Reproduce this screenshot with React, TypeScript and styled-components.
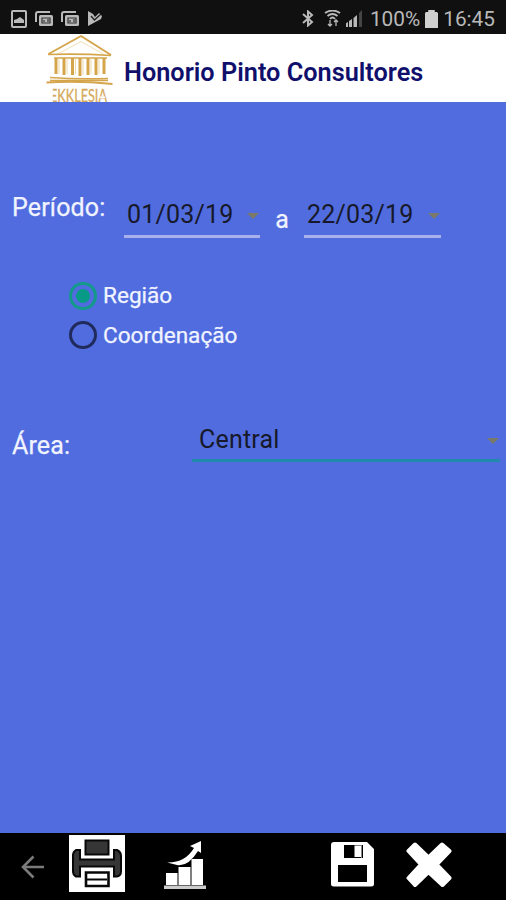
import React from "react";
import styled, { createGlobalStyle } from "styled-components";

const GlobalStyle = createGlobalStyle`
  * { box-sizing: border-box; }
  html, body { margin: 0; padding: 0; background: #000; }
  body { font-family: Roboto, "Noto Sans", sans-serif; overflow: hidden; }
  svg { display: block; flex: none; }
`;

const Screen = styled.div`
  width: 506px;
  height: 900px;
  display: flex;
  flex-direction: column;
  overflow: hidden;
`;

const StatusBar = styled.div`
  height: 34px;
  flex: none;
  display: flex;
  align-items: center;
  justify-content: space-between;
  padding: 3px 11px 0;
  background: #101010;
  color: #b9b9b9;
`;

const StatusGroup = styled.div<{ $gap: number }>`
  display: flex;
  align-items: center;
  gap: ${(p) => p.$gap}px;
`;

const StatusText = styled.span`
  font-size: 20.8px;
  line-height: 24px;
`;

const Header = styled.header`
  height: 68px;
  flex: none;
  display: flex;
  align-items: flex-start;
  padding-left: 44px;
  background: #fff;
`;

const Title = styled.h1`
  margin: 24px 0 0 10px;
  font-size: 25.3px;
  line-height: 30px;
  font-weight: 600;
  color: #10106c;
  white-space: nowrap;
`;

const Form = styled.main`
  flex: 1;
  display: flex;
  flex-direction: column;
  padding-left: 12px;
  background: #506cdf;
`;

const Row = styled.div<{ $top: number }>`
  display: flex;
  align-items: flex-start;
  margin-top: ${(p) => p.$top}px;
`;

const Label = styled.span<{ $width: number; $top?: number; $center?: boolean }>`
  width: ${(p) => p.$width}px;
  flex: none;
  padding-top: ${(p) => p.$top ?? 0}px;
  font-size: 25px;
  line-height: 30px;
  letter-spacing: 0.15px;
  text-align: ${(p) => (p.$center ? "center" : "left")};
  color: #f1f4ff;
  -webkit-text-stroke: 0.25px #f1f4ff;
  white-space: nowrap;
`;

const Picker = styled.div<{ $width: number; $height: number; $line: string; $inset: number }>`
  width: ${(p) => p.$width}px;
  height: ${(p) => p.$height}px;
  flex: none;
  display: flex;
  justify-content: space-between;
  align-items: flex-start;
  padding-left: ${(p) => p.$inset}px;
  border-bottom: 3px solid ${(p) => p.$line};
  color: #17192a;
  font-size: 25px;
  line-height: 30px;
  letter-spacing: 0.2px;
`;

const Caret = styled.span`
  width: 0;
  height: 0;
  margin: 13px 1px 0 0;
  border: 6px solid transparent;
  border-top-color: #7b7a68;
  border-bottom: 0;
`;

const Options = styled.div`
  display: flex;
  flex-direction: column;
  margin: 38px 0 0 57px;
`;

const Option = styled.label`
  height: 39.5px;
  display: flex;
  align-items: center;
  gap: 6px;
  font-size: 22.6px;
  color: #f1f4ff;
  -webkit-text-stroke: 0.25px #f1f4ff;
`;

const Radio = styled.span<{ $on?: boolean }>`
  width: 28px;
  height: 28px;
  display: grid;
  place-items: center;
  border: 3px solid ${(p) => (p.$on ? "#139989" : "#202b5c")};
  border-radius: 50%;
  &::after {
    content: "";
    width: 14px;
    height: 14px;
    border-radius: 50%;
    background: ${(p) => (p.$on ? "#079b87" : "transparent")};
  }
`;

const Toolbar = styled.footer`
  height: 67px;
  flex: none;
  display: flex;
  align-items: flex-start;
  background: #000;
`;

const Tool = styled.button<{ $left: number; $top: number }>`
  margin: ${(p) => p.$top}px 0 0 ${(p) => p.$left}px;
  padding: 0;
  border: 0;
  background: none;
`;

const Logo = () => (
  <svg width="70" height="68" viewBox="44 34 70 68" overflow="visible" fill="none" stroke="#d5a54c">
    <path d="M48.500 54L81 36L111 55" strokeWidth="2" strokeLinejoin="round" />
    <path d="M56 55L81 41.500L105 55" stroke="#ecd5a3" strokeWidth="0.800" />
    <path d="M48 54.500Q80 53.500 111 55.500M54 58H107" strokeWidth="1.600" />
    <path d="M56 58V74M64 58V75M72.500 58V75M80 58V76M88 58V75M96 58V75M104 58V74" strokeWidth="3" />
    <path d="M59 58V74M67 58V74M75.500 58V74M83 58V75M91 58V74M99 58V74" stroke="#ead09a" strokeWidth="0.800" />
    <path d="M50 77.500Q78 79.500 108 78.500M50 80.500H108" strokeWidth="1.500" />
    <path d="M46.500 82.500Q79 80.500 112.500 84" strokeWidth="2" />
    <text x="50" y="101.500" textLength="57" lengthAdjust="spacingAndGlyphs" fontFamily="Lato" fontSize="17.500" fill="#d5a95a" stroke="#d5a95a" strokeWidth="0.300">EKKLESIA</text>
    <path d="M51.500 88V102" stroke="#fff" strokeWidth="2.600" />
    <path d="M99.500 97.300H105" stroke="#fff" strokeWidth="1.600" />
  </svg>
);

const ImageIcon = () => (
  <svg width="16" height="18" viewBox="0 0 16 18">
    <rect x="1" y="1" width="14" height="16" rx="1" fill="none" stroke="currentColor" strokeWidth="2" />
    <path d="M3 13V10L6 9L9 7L13 10V13Z" fill="currentColor" />
  </svg>
);

const CardsIcon = () => (
  <svg width="18" height="15" viewBox="0 0 18 15">
    <path d="M1 11V3Q1 1 3 1H15" fill="none" stroke="currentColor" strokeWidth="2" />
    <rect x="4" y="4" width="14" height="11" rx="1.500" fill="currentColor" />
    <path d="M7 7H15V12H7ZM9 9V11M13 8V11" fill="none" stroke="#303030" strokeWidth="1.200" />
  </svg>
);

const PlayIcon = () => (
  <svg width="16" height="17" viewBox="0 0 16 17">
    <path d="M1 1L6 4L8 7L12 3L15 6L14 9L1 16Z" fill="currentColor" />
    <path d="M4 6L7.500 10L14 4" fill="none" stroke="#222" strokeWidth="1.400" />
  </svg>
);

const BluetoothIcon = () => (
  <svg width="17" height="17" viewBox="0 0 17 17" fill="none" stroke="currentColor" strokeWidth="2">
    <path d="M1 4L10 12L6 15.500V1.500L10 5L1 13" />
  </svg>
);

const WifiIcon = () => (
  <svg width="17" height="17" viewBox="0 0 17 17" fill="none" stroke="currentColor">
    <path d="M1 3Q8.500 -2 16 3M3.500 6Q8.500 2 13.500 6M6 9Q8.500 6 11 9" strokeWidth="1.900" />
    <path d="M6 10V16M4 14L6 16L8 14M12 16V10M10 12L12 10L14 12" strokeWidth="1.300" />
  </svg>
);

const SignalIcon = () => (
  <svg width="19" height="17" viewBox="1 0 19 17" fill="currentColor">
    <path d="M0 14L3 12V17H0ZM4 11L7 9V17H4ZM8.500 8L12 5V17H8.500Z" />
    <path d="M14 3L17 0V17H14Z" fill="#454545" />
  </svg>
);

const BatteryIcon = () => (
  <svg width="13" height="18" viewBox="0 0 12 18" preserveAspectRatio="none" fill="#d0d0d0">
    <path d="M3 0H9V2H11L12 3V18H0V3L1 2H3Z" />
  </svg>
);

const BackIcon = () => (
  <svg width="24" height="24" viewBox="0 0 24 24" fill="none" stroke="#7b7b7b" strokeWidth="2.600">
    <path d="M23 12H2M12.500 1.500L2 12L12.500 22.500" />
  </svg>
);

const PrinterIcon = () => (
  <svg width="56" height="57" viewBox="0 0 56 57">
    <path d="M0 0H56V57H0Z" fill="#fff" />
    <g fill="#363636" stroke="#080808" strokeWidth="2">
      <path d="M16.500 5.500H39.500V19.500H16.500Z" />
      <path d="M7 15H11V24.500H45V15H48Q52 17 52 21V36Q52 41 48 41.500H45V31.500H11V41.500H7Q4 40 4 36V20Q4 17 7 15Z" />
      <path d="M17 37.500H39.500V51H17Z" fill="#fff" strokeWidth="2.600" />
      <path d="M18 44.500H38" strokeWidth="2" />
    </g>
  </svg>
);

const ChartIcon = () => (
  <svg width="43" height="49" viewBox="0 0 43 49" fill="#fff">
    <path d="M2 33H13.500V45H2ZM14.500 27H26.500V45H14.500ZM27.500 19H39V45H27.500Z" />
    <path d="M0 45.500H42V49H0Z" fill="#ccc" />
    <path d="M3 22.500Q21 23 30 8L26 6L37 1V13L34 11Q24 27 13 25Z" />
  </svg>
);

const SaveIcon = () => (
  <svg width="44" height="45" viewBox="0 0 44 45" fillRule="evenodd">
    <path d="M3 0H36L43 7V42Q43 44.500 40 44.500H3Q0 44.500 0 42V3Q0 0 3 0ZM13 3V16H32V3ZM7 23V40H36V23Z" fill="#fff" />
    <path d="M23.500 3.500H30V15H23.500Z" fill="#fff" />
    <path d="M30.500 3V16" stroke="#888" strokeWidth="1" />
  </svg>
);

const CloseIcon = () => (
  <svg width="46" height="46" viewBox="0 0 46 46">
    <path d="M9 2.500L22.500 15.500L36 2.500L43.500 9L30.500 22.500L43.500 36L36.500 43L22.500 30L9 43L2.500 36L15 22.500L2.500 9Z" fill="#fff" stroke="#fff" strokeWidth="4" strokeLinejoin="round" />
  </svg>
);

export default function App() {
  return (
    <>
      <GlobalStyle />
      <Screen>
        <StatusBar>
          <StatusGroup $gap={8}>
            <ImageIcon />
            <CardsIcon />
            <CardsIcon />
            <PlayIcon />
          </StatusGroup>
          <StatusGroup $gap={5}>
            <BluetoothIcon />
            <WifiIcon />
            <SignalIcon />
            <StatusText>100%</StatusText>
            <BatteryIcon />
            <StatusText>16:45</StatusText>
          </StatusGroup>
        </StatusBar>
        <Header>
          <Logo />
          <Title>Honorio Pinto Consultores</Title>
        </Header>
        <Form>
          <Row $top={91}>
            <Label $width={112}>Período:</Label>
            <Row $top={7}>
              <Picker $width={136} $height={38} $line="#a8b1ec" $inset={3}>01/03/19<Caret /></Picker>
              <Label $width={44} $top={5} $center>a</Label>
              <Picker $width={137} $height={38} $line="#a8b1ec" $inset={3}>22/03/19<Caret /></Picker>
            </Row>
          </Row>
          <Options>
            <Option><Radio $on />Região</Option>
            <Option><Radio />Coordenação</Option>
          </Options>
          <Row $top={70}>
            <Label $width={180} $top={6}>Área:</Label>
            <Picker $width={308} $height={37} $line="#2189ab" $inset={7}>Central<Caret /></Picker>
          </Row>
        </Form>
        <Toolbar>
          <Tool $left={21} $top={22} aria-label="Voltar"><BackIcon /></Tool>
          <Tool $left={24} $top={2} aria-label="Imprimir"><PrinterIcon /></Tool>
          <Tool $left={39} $top={7} aria-label="Gráfico"><ChartIcon /></Tool>
          <Tool $left={124} $top={9} aria-label="Salvar"><SaveIcon /></Tool>
          <Tool $left={31} $top={9} aria-label="Fechar"><CloseIcon /></Tool>
        </Toolbar>
      </Screen>
    </>
  );
}
